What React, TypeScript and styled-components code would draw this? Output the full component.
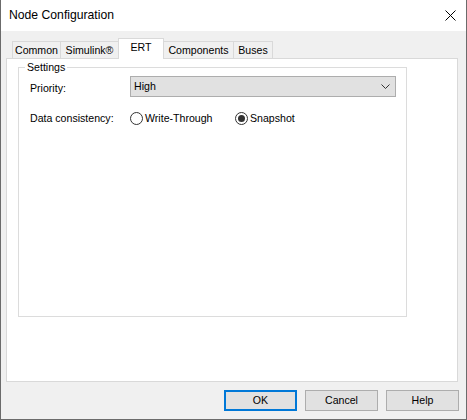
import React from 'react';
import styled, { createGlobalStyle } from 'styled-components';

const Global = createGlobalStyle`
  html, body { margin: 0; padding: 0; background: #ffffff; }
  body { font-family: "Liberation Sans", Arial, sans-serif; }
`;

const Window = styled.div`
  width: 467px;
  height: 420px;
  box-sizing: border-box;
  border: 1px solid #6b6b6b;
  border-top: none;
  display: flex;
  flex-direction: column;
  background: #f0f0f0;
  font-family: "Liberation Sans", Arial, sans-serif;
  font-size: 10.6px;
  color: #000;
`;

const TitleBar = styled.div`
  height: 31px;
  flex: none;
  background: #ffffff;
  display: flex;
  align-items: center;
  justify-content: space-between;
  padding: 0 10px 0 8px;
`;

const Title = styled.span`
  font-size: 12.2px;
  padding-bottom: 1px;
`;

const CloseButton = styled.span`
  display: flex;
  width: 11px;
  height: 11px;
`;

const Body = styled.div`
  flex: 1;
  display: flex;
  flex-direction: column;
  padding: 7px 7px 8px 5px;
`;

const TabStrip = styled.div`
  height: 20px;
  display: flex;
  align-items: flex-end;
  padding-left: 6px;
  position: relative;
  z-index: 1;
`;

const Tab = styled.div<{ $w: number; $active?: boolean }>`
  box-sizing: border-box;
  width: ${(p) => p.$w}px;
  height: ${(p) => (p.$active ? 21 : 17)}px;
  margin-bottom: ${(p) => (p.$active ? -1 : 0)}px;
  margin-left: -1px;
  &:first-child { margin-left: 0; }
  border: 1px solid #d9d9d9;
  border-bottom: none;
  background: ${(p) => (p.$active ? '#ffffff' : '#f0f0f0')};
  position: relative;
  z-index: ${(p) => (p.$active ? 2 : 1)};
  text-align: center;
  padding-top: 2px;
  line-height: 13px;
  white-space: nowrap;
`;

const Panel = styled.div`
  flex: 1;
  background: #ffffff;
  border: 1px solid #d9d9d9;
  margin-right: 1px;
  padding: 2px 0 0 11px;
`;

const GroupBox = styled.fieldset`
  box-sizing: border-box;
  width: 389px;
  height: 256px;
  margin: 0;
  border: 1px solid #dcdcdc;
  padding: 2px 0 0 11px;
`;

const Legend = styled.legend`
  padding: 0 2px;
  margin-left: -5px;
  line-height: 13px;
`;

const FormGrid = styled.div`
  display: grid;
  grid-template-columns: 100px 266px;
  row-gap: 14px;
  align-items: center;
`;

const FieldLabel = styled.span<{ $shift?: number }>`
  line-height: 13px;
  padding-top: ${(p) => p.$shift ?? 0}px;
`;

const Combo = styled.div`
  box-sizing: border-box;
  height: 21px;
  background: #e1e1e1;
  border: 1px solid #adadad;
  display: flex;
  align-items: center;
  justify-content: space-between;
  padding: 0 5px 0 3px;
  line-height: 13px;
`;

const RadioGroup = styled.div`
  display: flex;
  align-items: center;
  height: 15px;
`;

const RadioOption = styled.label`
  display: flex;
  align-items: center;
  gap: 2px;
  min-width: 105px;
  line-height: 13px;
`;

const RadioDot = styled.input`
  appearance: none;
  box-sizing: border-box;
  width: 13px;
  height: 13px;
  margin: 0;
  border: 1px solid #333333;
  border-radius: 50%;
  background: #ffffff;
  display: grid;
  place-items: center;
  &:checked::after {
    content: '';
    width: 7px;
    height: 7px;
    border-radius: 50%;
    background: #333333;
  }
`;

const ButtonRow = styled.div`
  display: flex;
  justify-content: flex-end;
  gap: 8px;
  margin-top: 8px;
`;

const DialogButton = styled.button<{ $default?: boolean }>`
  box-sizing: border-box;
  width: 73px;
  height: 21px;
  padding: 0;
  background: #e1e1e1;
  border: ${(p) => (p.$default ? '2px solid #0078d7' : '1px solid #adadad')};
  font-family: "Liberation Sans", Arial, sans-serif;
  font-size: 10.6px;
  color: #000;
  line-height: 13px;
`;

const tabs = [
  { label: 'Common', w: 49 },
  { label: 'Simulink®', w: 59 },
  { label: 'ERT', w: 46, active: true },
  { label: 'Components', w: 71 },
  { label: 'Buses', w: 40 },
];

export default function App() {
  return (
    <>
      <Global />
      <Window>
        <TitleBar>
          <Title>Node Configuration</Title>
          <CloseButton>
            <svg width="11" height="11" viewBox="0 0 11 11">
              <path d="M0.5 0.5 L10.5 10.5 M10.5 0.5 L0.5 10.5" stroke="#000" strokeWidth="1" fill="none" />
            </svg>
          </CloseButton>
        </TitleBar>
        <Body>
          <TabStrip>
            {tabs.map((t) => (
              <Tab key={t.label} $w={t.w} $active={t.active}>
                {t.label}
              </Tab>
            ))}
          </TabStrip>
          <Panel>
            <GroupBox>
              <Legend>Settings</Legend>
              <FormGrid>
                <FieldLabel $shift={3}>Priority:</FieldLabel>
                <Combo>
                  <span>High</span>
                  <svg width="9" height="5" viewBox="0 0 9 5">
                    <path d="M0.5 0.5 L4.5 4.5 L8.5 0.5" stroke="#333" strokeWidth="1" fill="none" />
                  </svg>
                </Combo>
                <FieldLabel>Data consistency:</FieldLabel>
                <RadioGroup>
                  <RadioOption>
                    <RadioDot type="radio" name="dc" readOnly />
                    Write-Through
                  </RadioOption>
                  <RadioOption>
                    <RadioDot type="radio" name="dc" defaultChecked />
                    Snapshot
                  </RadioOption>
                </RadioGroup>
              </FormGrid>
            </GroupBox>
          </Panel>
          <ButtonRow>
            <DialogButton $default>OK</DialogButton>
            <DialogButton>Cancel</DialogButton>
            <DialogButton>Help</DialogButton>
          </ButtonRow>
        </Body>
      </Window>
    </>
  );
}
